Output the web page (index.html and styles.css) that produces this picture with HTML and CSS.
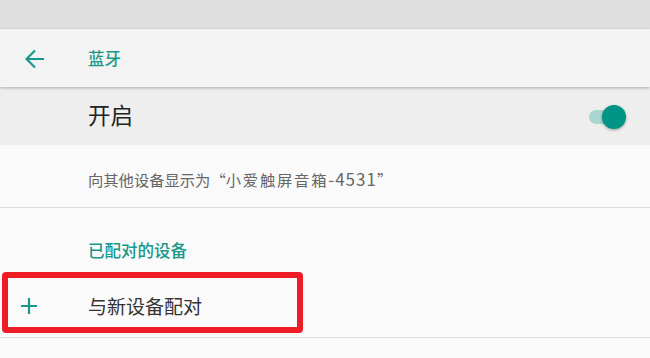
FILE: index.html
```html
<!DOCTYPE html>
<html lang="zh">
<head>
<meta charset="utf-8">
<link rel="stylesheet" href="styles.css">
</head>
<body>
<div class="status"></div>
<header class="toolbar">
  <svg class="back" width="20" height="20" viewBox="0 0 20 20"><path d="M19 10H2M10 1.5L1.5 10l8.5 8.5" fill="none" stroke="#17988a" stroke-width="2.2"/></svg>
  <span class="title">蓝牙</span>
</header>
<div class="toggle-row">
  <span class="toggle-label">开启</span>
  <div class="switch"><div class="track"></div><div class="thumb"></div></div>
</div>
<div class="info-row">
  <span class="info">向其他设备显示为“<span class="name">小爱触屏音箱</span><span class="latin">-4531</span>”</span>
</div>
<div class="section">
  <div class="section-title">已配对的设备</div>
  <div class="pair-row">
    <svg class="plus" width="16" height="16" viewBox="0 0 16 16"><path d="M8 0v16M0 8h16" stroke="#17988a" stroke-width="2.2"/></svg>
    <span class="pair-label">与新设备配对</span>
    <div class="highlight"></div>
  </div>
</div>
</body>
</html>
```
FILE: styles.css
```css
* { box-sizing: border-box; }
html, body { margin: 0; padding: 0; }
body {
  width: 650px;
  height: 358px;
  overflow: hidden;
  background: #fafafa;
  font-family: "Noto Sans CJK SC", "Noto Sans", sans-serif;
}
.status {
  height: 29px;
  background: #dfdfdf;
}
.toolbar {
  position: relative;
  z-index: 2;
  height: 58px;
  background: #f3f3f3;
  box-shadow: 0 1px 3px rgba(0,0,0,0.28);
  display: flex;
  align-items: center;
  padding-left: 25px;
}
.back { display: block; margin-top: 1px; }
.title {
  margin-left: 43px;
  font-size: 16.5px;
  line-height: 1;
  color: #17988a;
  font-weight: 500;
  margin-top: 1px;
}
.toggle-row {
  height: 58px;
  background: #eeeeee;
  display: flex;
  align-items: center;
  justify-content: space-between;
  padding: 0 22px 0 88px;
}
.toggle-label {
  font-size: 22.5px;
  line-height: 1;
  color: #222;
  margin-top: -3px;
}
.switch {
  position: relative;
  width: 40px;
  height: 26px;
  margin-top: 1px;
}
.track {
  position: absolute;
  left: 1px;
  top: 6px;
  width: 30px;
  height: 14px;
  border-radius: 7px;
  background: #a9d6d0;
}
.thumb {
  position: absolute;
  right: 2px;
  top: 1px;
  width: 24px;
  height: 24px;
  border-radius: 50%;
  background: #009485;
  box-shadow: 0 1px 3px rgba(0,0,0,0.35);
}
.info-row {
  height: 63px;
  background: #fafafa;
  border-bottom: 1px solid #dcdcdc;
  display: flex;
  align-items: center;
  padding-left: 88px;
}
.info {
  font-size: 15.3px;
  line-height: 1;
  color: #666;
  margin-top: 5px;
}
.name {
  letter-spacing: 1.8px;
}
.latin {
  font-size: 17px;
  letter-spacing: 1px;
}
.section {
  background: #fafafa;
}
.section-title {
  height: 63px;
  padding: 34px 0 0 88px;
  font-size: 16.5px;
  line-height: 1;
  color: #17988a;
  font-weight: 500;
}
.pair-row {
  position: relative;
  height: 67px;
  border-bottom: 1px solid #dcdcdc;
  display: flex;
  align-items: center;
  padding-left: 21px;
}
.plus { display: block; margin-top: 3px; }
.pair-label {
  margin-left: 51px;
  font-size: 19px;
  line-height: 1;
  color: #333;
  margin-top: 2px;
}
.highlight {
  position: absolute;
  left: 2px;
  top: 1px;
  width: 301px;
  height: 61px;
  border: 6px solid #ee1c25;
  border-radius: 4px;
}
```
